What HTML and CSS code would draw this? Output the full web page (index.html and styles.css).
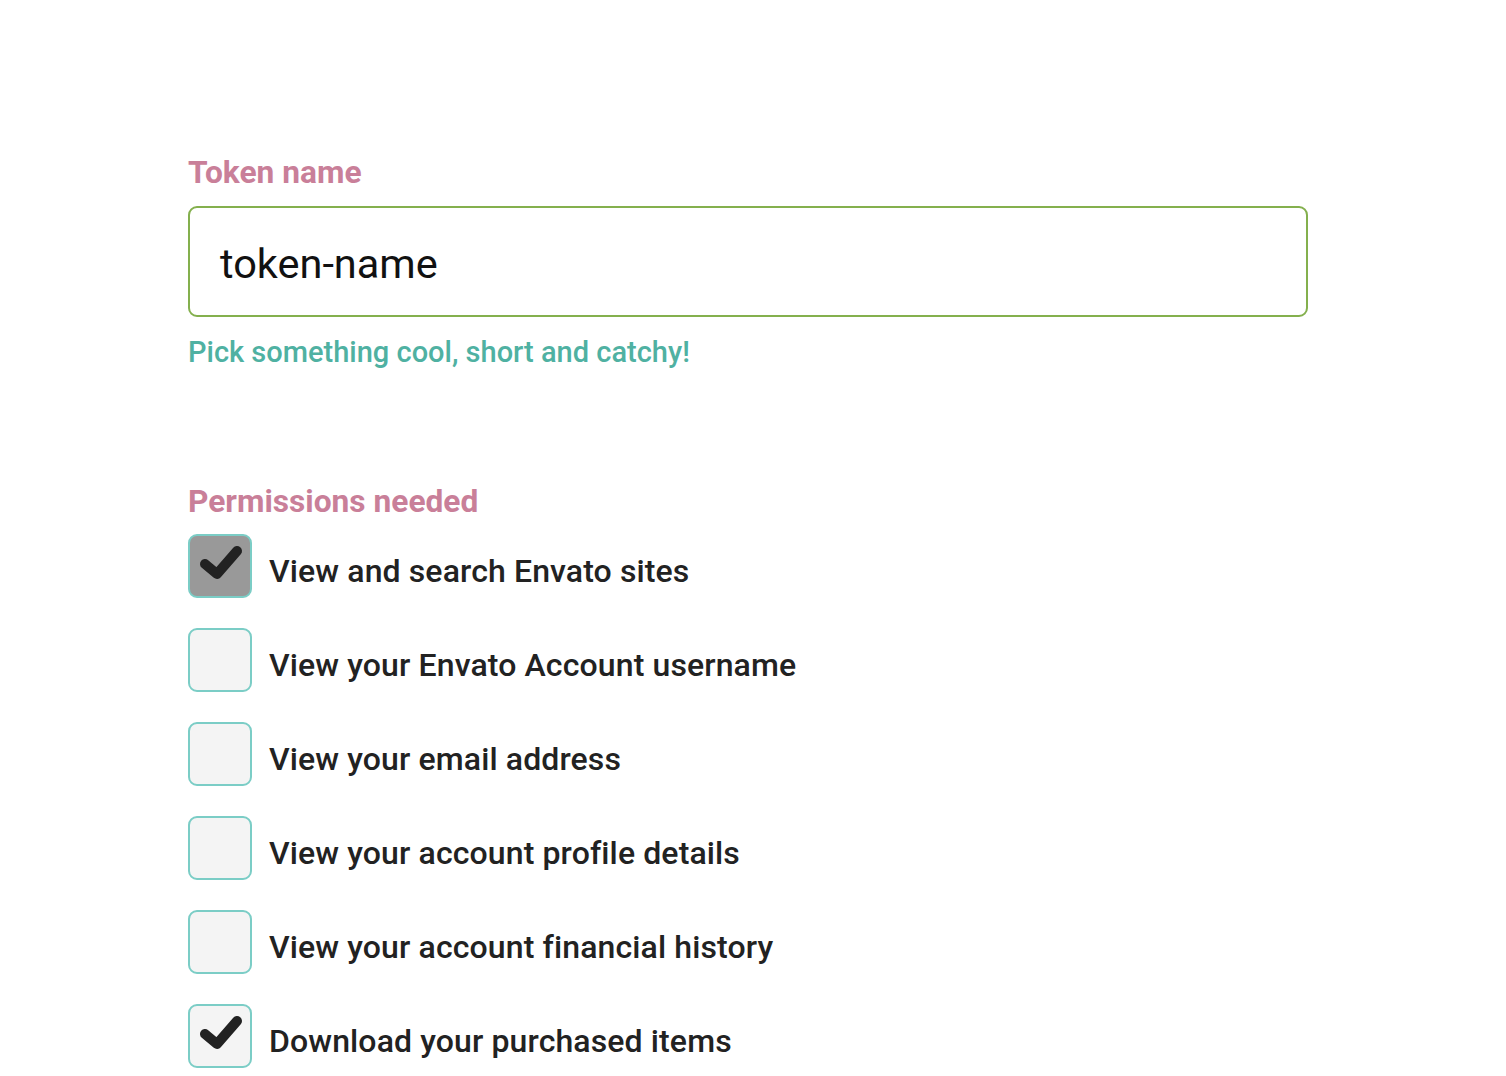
FILE: index.html
```html
<!DOCTYPE html>
<html lang="en">
<head>
<meta charset="utf-8">
<title>Token</title>
<link rel="stylesheet" href="styles.css">
</head>
<body>
<main class="form">
  <section class="field">
    <label class="field-label" for="token">Token name</label>
    <div class="input-box"><span id="token" class="input-value">token-name</span></div>
    <p class="hint">Pick something cool, short and catchy!</p>
  </section>
  <section class="perms">
    <h2 class="field-label">Permissions needed</h2>
    <ul class="perm-list">
      <li class="perm"><span class="box box-dark"><svg viewBox="0 0 60 60" class="tick"><path d="M15 28 L27 38 L47 15" /></svg></span><span class="perm-text">View and search Envato sites</span></li>
      <li class="perm"><span class="box"></span><span class="perm-text">View your Envato Account username</span></li>
      <li class="perm"><span class="box"></span><span class="perm-text">View your email address</span></li>
      <li class="perm"><span class="box"></span><span class="perm-text">View your account profile details</span></li>
      <li class="perm"><span class="box"></span><span class="perm-text">View your account financial history</span></li>
      <li class="perm"><span class="box"><svg viewBox="0 0 60 60" class="tick"><path d="M15 28 L27 38 L47 15" /></svg></span><span class="perm-text">Download your purchased items</span></li>
    </ul>
  </section>
</main>
</body>
</html>
```
FILE: styles.css
```css
html, body {
  margin: 0;
  padding: 0;
  background: #ffffff;
}
body {
  font-family: Roboto, "Liberation Sans", sans-serif;
}
.form {
  padding: 153px 0 0 188px;
  width: 1120px;
}
.field-label {
  display: block;
  margin: 0;
  font-size: 31.7px;
  font-weight: 700;
  line-height: 40px;
  color: #c97f99;
}
.input-box {
  box-sizing: border-box;
  margin-top: 13px;
  height: 111px;
  border: 2px solid #84b04e;
  border-radius: 9px;
  display: flex;
  align-items: center;
  padding: 4px 0 0 30px;
}
.input-value {
  font-size: 41.5px;
  color: #111;
  font-weight: 400;
}
.hint {
  margin: 18px 0 0;
  font-size: 29px;
  font-weight: 500;
  line-height: 34px;
  color: #4fb1a2;
}
.perms {
  margin-top: 113px;
}
.perm-list {
  list-style: none;
  margin: 12px 0 0;
  padding: 0;
  display: flex;
  flex-direction: column;
  gap: 30px;
}
.perm {
  display: flex;
  align-items: center;
  gap: 17px;
  height: 64px;
}
.box {
  box-sizing: border-box;
  flex: none;
  width: 64px;
  height: 64px;
  border: 2px solid #7bcdc6;
  border-radius: 9px;
  background: #f4f4f4;
}
.box-dark {
  background: #999999;
}
.tick {
  display: block;
  width: 60px;
  height: 60px;
}
.tick path {
  fill: none;
  stroke: #222;
  stroke-width: 10;
  stroke-linecap: round;
  stroke-linejoin: round;
}
.perm-text {
  font-size: 32px;
  font-weight: 500;
  letter-spacing: 0.12px;
  color: #222;
  margin-top: 10px;
}
```
